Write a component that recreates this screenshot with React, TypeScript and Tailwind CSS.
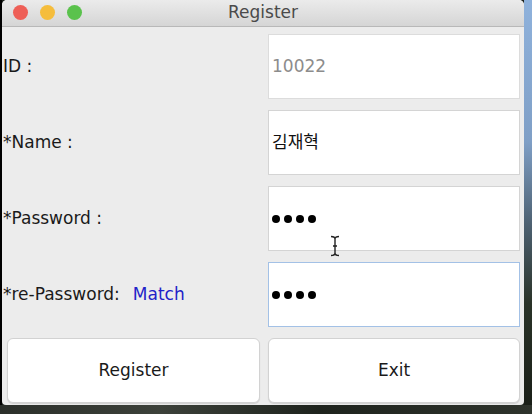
const font = { fontFamily: '"DejaVu Sans", "Noto Sans CJK KR", sans-serif' };

function Dots() {
  return (
    <div className="flex gap-[4px]">
      <span className="w-[8px] h-[8px] rounded-full bg-black" />
      <span className="w-[8px] h-[8px] rounded-full bg-black" />
      <span className="w-[8px] h-[8px] rounded-full bg-black" />
      <span className="w-[8px] h-[8px] rounded-full bg-black" />
    </div>
  );
}

function Label({ children }: { children: React.ReactNode }) {
  return (
    <div className="flex items-center -ml-[4px] text-[17px] text-[#1a1a1a]">
      {children}
    </div>
  );
}

export default function App() {
  return (
    <div
      className="w-[532px] h-[414px] flex flex-col bg-[#1c211c] overflow-hidden"
      style={font}
    >
      <div className="flex h-[405px]">
        <div className="w-[2px] bg-black" />
        <div className="relative w-[522px] flex flex-col bg-[#ececec] rounded-t-[5px] rounded-b-[4px] overflow-hidden">
          {/* title bar */}
          <div className="relative h-[27px] flex items-center justify-center bg-[linear-gradient(#ebebeb,#d5d5d5)] border-b border-[#b8b8b8]">
            <div className="absolute left-[11px] top-[5px] flex gap-[12px]">
              <span className="w-[15px] h-[15px] rounded-full bg-[#ee5f57]" />
              <span className="w-[15px] h-[15px] rounded-full bg-[#f5bd3c]" />
              <span className="w-[15px] h-[15px] rounded-full bg-[#5ac24c]" />
            </div>
            <span className="text-[17px] text-[#4a4a4a]">Register</span>
          </div>

          {/* form */}
          <div className="grid grid-cols-[253px_252px] auto-rows-[65px] gap-x-[8px] gap-y-[11px] pl-[5px] pr-[4px] pt-[7px]">
            <Label>ID :</Label>
            <div className="bg-white border border-[#dcdcdc] flex items-center px-[3px] text-[17px] text-[#8c8c8c]">
              10022
            </div>

            <Label>*Name :</Label>
            <div className="bg-white border border-[#d4d4d4] flex items-center px-[3px] text-[17px] text-[#111]">
              김재혁
            </div>

            <Label>*Password :</Label>
            <div className="bg-white border border-[#d4d4d4] flex items-center px-[3px]">
              <Dots />
            </div>

            <Label>
              *re-Password:<span className="ml-[13px] text-[#2222c8]">Match</span>
            </Label>
            <div className="bg-white border border-[#a3c1e6] flex items-center px-[3px]">
              <Dots />
            </div>

            <button className="bg-white border border-[#d2d2d2] rounded-[6px] shadow-[0_1px_1px_rgba(0,0,0,0.12)] text-[17px] text-[#1a1a1a]">
              Register
            </button>
            <button className="bg-white border border-[#d2d2d2] rounded-[6px] shadow-[0_1px_1px_rgba(0,0,0,0.12)] text-[17px] text-[#1a1a1a]">
              Exit
            </button>
          </div>

          {/* mouse cursor */}
          <svg className="absolute left-[326px] top-[235px]" width="14" height="22" viewBox="0 0 14 22">
            <path
              d="M3 1.5 Q7 1.5 7 4 Q7 1.5 11 1.5 M7 4 V18 M3 20.5 Q7 20.5 7 18 Q7 20.5 11 20.5 M5 11 H9"
              fill="none"
              stroke="#222"
              strokeWidth="1.4"
            />
          </svg>
        </div>
        <div className="flex-1 bg-[linear-gradient(#8fb2dc,#7f9fc6_35%,#4e6273_55%,#2a3328_75%,#1a1f18)]" />
      </div>
      <div className="flex-1 bg-[linear-gradient(90deg,#2b2f2a,#3c413a_30%,#1e231d_60%,#2e332c)]" />
    </div>
  );
}
